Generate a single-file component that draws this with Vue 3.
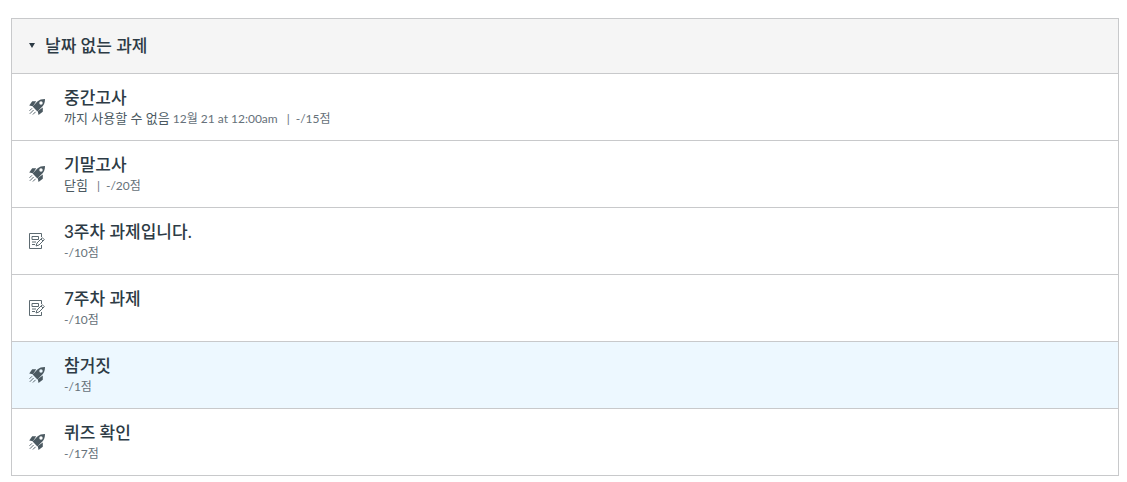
<script setup>
import { ref } from 'vue'

const open = ref(true)
const items = [
  { id: 1, type: 'quiz', title: '중간고사', label: '까지 사용할 수 없음', date: '12월 21 at 12:00am', score: '-/15점' },
  { id: 2, type: 'quiz', title: '기말고사', label: '닫힘', score: '-/20점' },
  { id: 3, type: 'assignment', title: '3주차 과제입니다.', score: '-/10점' },
  { id: 4, type: 'assignment', title: '7주차 과제', score: '-/10점' },
  { id: 5, type: 'quiz', title: '참거짓', score: '-/1점', active: true },
  { id: 6, type: 'quiz', title: '퀴즈 확인', score: '-/17점' }
]
</script>

<template>
  <main class="page">
    <section class="group">
      <h2 class="heading">
        <button class="toggle" type="button" :aria-expanded="open" @click="open = !open">
          <svg class="arrow" :class="{ closed: !open }" viewBox="0 0 6 5" aria-hidden="true">
            <path d="M0 0h6L3 5z" />
          </svg>
          <span>날짜 없는 과제</span>
        </button>
      </h2>
      <ul v-if="open" class="list">
        <li v-for="item in items" :key="item.id" class="row" :class="{ active: item.active }">
          <svg v-if="item.type === 'quiz'" class="icon" viewBox="0 0 16 16" aria-hidden="true">
            <path fill="currentColor" fill-rule="evenodd" d="M16 0C12.800 0 10.300.8 8.400 2.600L3.600 7.600 8.400 12.400l5-4.800C15.200 5.700 16 3.300 16 0zM12 2.300a1.700 1.700 0 1 1 0 3.400 1.700 1.700 0 0 1 0-3.400z" />
            <path fill="currentColor" d="M7.200 2.200H3.200L.2 6.500l3.800.7zM13.800 8.600v4.200L9.500 15.900l-.7-3.800z" />
            <path fill="none" stroke="currentColor" stroke-width=".9" d="M3 9.300.500 11.800M4.600 11 .8 14.800M6.600 12.800l-2.700 2.700" />
          </svg>
          <svg v-else class="icon" viewBox="0 0 16 16" aria-hidden="true">
            <g fill="none" stroke="currentColor" stroke-width=".9">
              <path d="M12.500 4v-3.500H.5v15h12V12" />
              <path d="M3 3.500h6.500v3H3zM3 9h4M3 11.500h3" />
              <path d="m7 13 1-3 5.300-5.300 2 2L10 12zM12 6l2 2" />
            </g>
          </svg>
          <div class="info">
            <a class="title" href="#">{{ item.title }}</a>
            <div class="meta">
              <span v-if="item.label" class="status"><span class="label">{{ item.label }}</span>{{ item.date ? ' ' + item.date : '' }}</span>
              <span>{{ item.score }}</span>
            </div>
          </div>
        </li>
      </ul>
    </section>
  </main>
</template>

<style>
body {
  margin: 0;
  background: #fff;
}
</style>

<style scoped>
.page {
  padding: 18px 8px 6px 11px;
  font-family: Lato, "Noto Sans CJK KR", sans-serif;
  color: #2d3b45;
}
.group {
  border: 1px solid #c8c9cb;
}
.heading {
  margin: 0;
  background: #f5f5f5;
}
.toggle {
  display: flex;
  align-items: center;
  gap: 10px;
  width: 100%;
  height: 54px;
  padding: 0 17px 1px;
  border: 0;
  background: none;
  color: #2d3b45;
  font: 500 17px/24px Lato, "Noto Sans CJK KR", sans-serif;
  text-align: left;
}
.arrow {
  width: 6px;
  height: 5px;
  fill: #2d3b45;
}
.arrow.closed {
  transform: rotate(-90deg);
}
.list {
  margin: 0;
  padding: 0;
  list-style: none;
}
.row {
  display: flex;
  align-items: center;
  gap: 19px;
  height: 66px;
  padding: 0 17px;
  border-top: 1px solid #c8c9cb;
}
.row.active {
  background: #edf8ff;
}
.icon {
  flex: none;
  width: 16px;
  height: 16px;
  color: #4b5961;
}
.info {
  min-width: 0;
}
.title {
  display: block;
  color: #2d3b45;
  font-size: 17px;
  font-weight: 500;
  line-height: 24px;
  text-decoration: none;
}
.meta {
  display: flex;
  align-items: baseline;
  font-size: 12px;
  line-height: 18px;
  color: #66717a;
}
.label {
  color: #4b5961;
  font-size: 13px;
  line-height: 16px;
}
.status::after {
  content: "|";
  margin: 0 6px 0 9px;
}
</style>
